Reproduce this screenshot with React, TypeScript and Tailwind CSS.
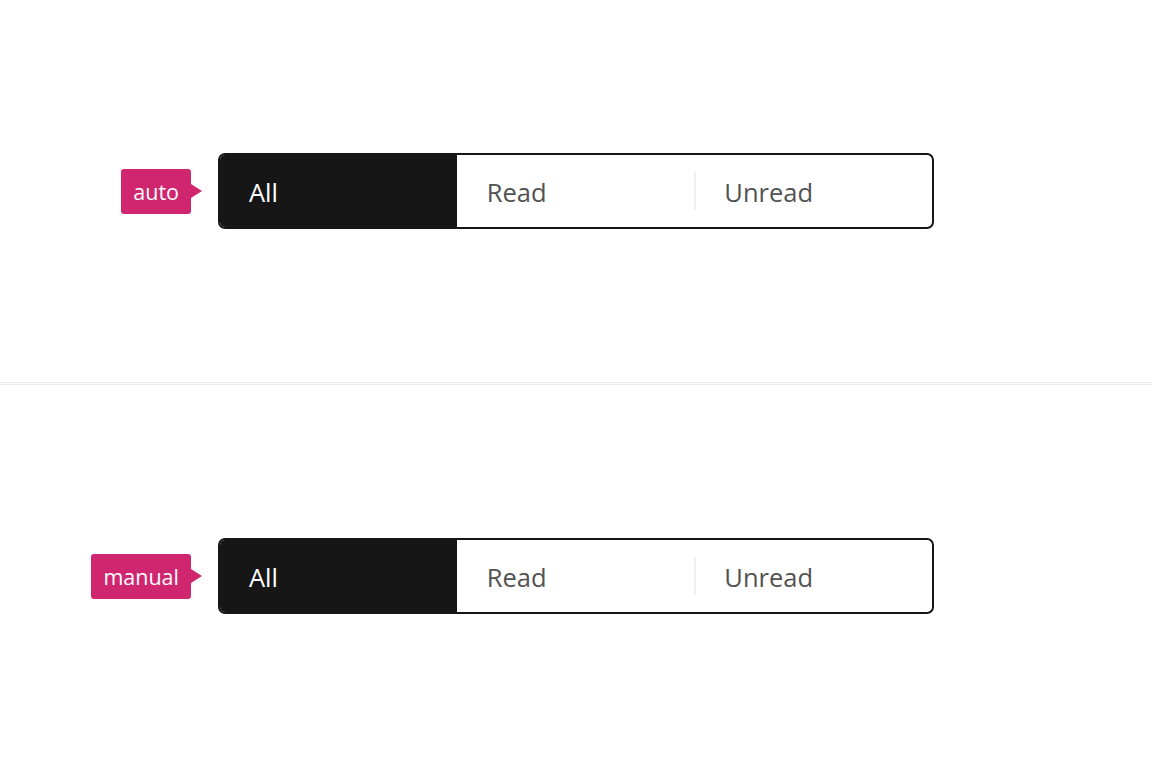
const options = ["All", "Read", "Unread"];

function Tag({ text }: { text: string }) {
  return (
    <div className="flex items-center">
      <div className="h-[45px] px-[12px] pt-[1px] flex items-center rounded-[3px] bg-[#d02670] text-white text-[21.5px] leading-none">
        {text}
      </div>
      <div className="w-0 h-0 border-y-[7px] border-y-transparent border-l-[11px] border-l-[#d02670]" />
    </div>
  );
}

function ContentSwitcher() {
  const selected = 0;
  return (
    <div className="w-[716px] h-[76px] flex rounded-[7px] border-2 border-[#161616] overflow-hidden bg-white">
      {options.map((opt, i) => (
        <div
          key={opt}
          className={
            i === selected
              ? "flex-1 flex items-center pl-[29px] pt-[2px] bg-[#161616] text-white text-[25.5px]"
              : "flex-1 flex items-center pl-[30px] pt-[2px] text-[#525252] text-[25.5px] relative"
          }
        >
          {i === 2 && (
            <span className="absolute left-0 top-[17px] bottom-[17px] w-[2px] border-x border-[#f3eef0]" />
          )}
          {opt}
        </div>
      ))}
    </div>
  );
}

function Row({ label, last }: { label: string; last?: boolean }) {
  return (
    <div
      className={
        last
          ? "h-[383px] flex items-center border-t border-[#ececec]"
          : "h-[383px] flex items-center border-b border-[#ececec]"
      }
    >
      <div className="w-[202px] flex justify-end">
        <Tag text={label} />
      </div>
      <div className="ml-[16px]">
        <ContentSwitcher />
      </div>
    </div>
  );
}

export default function App() {
  return (
    <div
      className="w-[1152px] h-[767px] bg-white flex flex-col gap-[1px]"
      style={{ fontFamily: '"Open Sans", "Noto Sans", sans-serif' }}
    >
      <Row label="auto" />
      <Row label="manual" last />
    </div>
  );
}
